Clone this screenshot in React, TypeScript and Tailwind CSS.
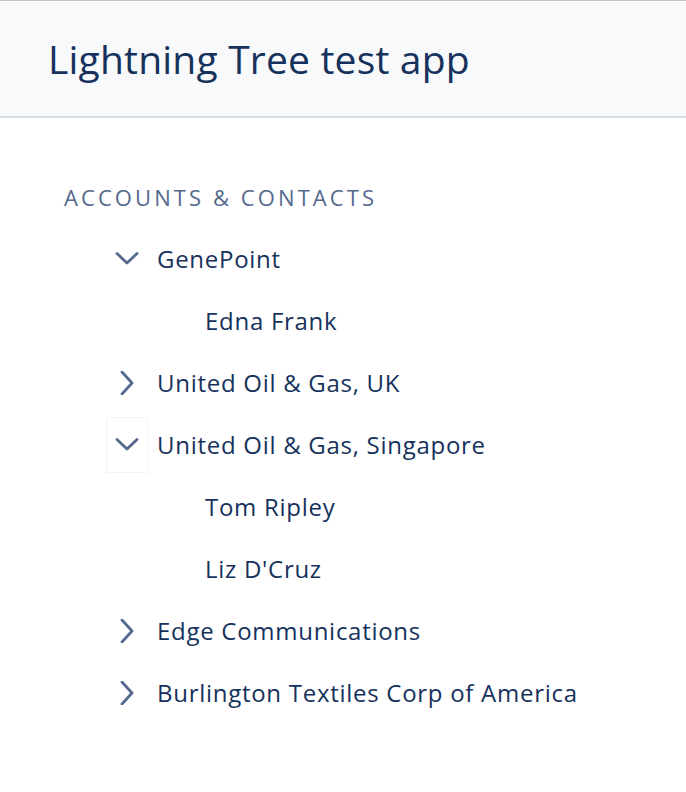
import type * as React from 'react';

type TreeNode = {
  label: string;
  expanded?: boolean;
  focused?: boolean;
  items?: TreeNode[];
};

const tree: TreeNode[] = [
  { label: 'GenePoint', expanded: true, items: [{ label: 'Edna Frank' }] },
  { label: 'United Oil & Gas, UK', items: [{ label: 'James Kirk' }] },
  {
    label: 'United Oil & Gas, Singapore',
    expanded: true,
    focused: true,
    items: [{ label: 'Tom Ripley' }, { label: "Liz D'Cruz" }],
  },
  { label: 'Edge Communications', items: [{ label: 'Rose Gonzalez' }] },
  { label: 'Burlington Textiles Corp of America', items: [{ label: 'Jack Rogers' }] },
];

const Chevron = ({ open }: { open: boolean }) => (
  <svg
    viewBox="0 0 24 24"
    className="w-[24px] h-[24px] text-[#54698d]"
    fill="none"
    stroke="currentColor"
    strokeWidth={2.8}
    strokeLinecap="round"
    strokeLinejoin="round"
  >
    {open ? <path d="M2 6.5 L12 16 L22 6.5" /> : <path d="M7 1 L17 12 L7 23" />}
  </svg>
);

const TreeItem: React.FC<{ node: TreeNode }> = ({ node }) => {
  const hasChildren = !!node.items && node.items.length > 0;
  return (
    <li>
      <div className="flex items-center h-[62px]">
        <div className="w-[152px] flex justify-end pr-[4px]">
          {hasChildren ? (
            <div
              className={`w-[42px] h-[56px] flex items-center justify-center ${
                node.focused ? 'border border-[#f3f4f6]' : ''
              }`}
            >
              <Chevron open={!!node.expanded} />
            </div>
          ) : null}
        </div>
        <span className={hasChildren ? 'ml-[5px]' : 'ml-[53px]'}>{node.label}</span>
      </div>
      {hasChildren && node.expanded && (
        <ul>
          {node.items!.map((child) => (
            <TreeItem key={child.label} node={child} />
          ))}
        </ul>
      )}
    </li>
  );
};

export default function App() {
  return (
    <div className="min-h-[792px] bg-white text-[#16325c]" style={{ fontFamily: '"Open Sans", sans-serif' }}>
      <header className="h-[118px] bg-[#f7f9fb] border-t border-t-[#c2c2c2] border-b-2 border-b-[#d8dde6] flex items-center pl-[48px]">
        <h1 className="text-[39px] leading-none tracking-[0.005em]">Lightning Tree test app</h1>
      </header>

      <main className="pt-[48px]">
        <h4 className="h-[62px] flex items-center pl-[64px] text-[22px] uppercase tracking-[0.14em] text-[#54698d]">
          Accounts &amp; Contacts
        </h4>
        <ul className="text-[24px] tracking-[0.03em]">
          {tree.map((node) => (
            <TreeItem key={node.label} node={node} />
          ))}
        </ul>
      </main>
    </div>
  );
}
